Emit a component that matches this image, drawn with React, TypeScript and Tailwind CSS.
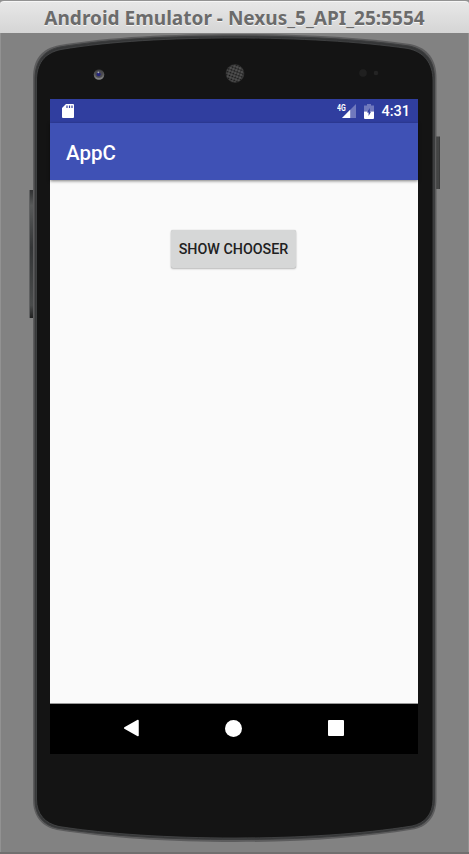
const BODY =
  'M33 78 C33 60 41 48.500 60 45 C110 36.8 172 34 235 34 C298 34 359 37 410 44 C428 47.500 436.500 60 436.500 78 L436.500 799 C436.500 817 427 827 413 829.5 C362 838 300 842 235 842 C170 842 107 838 57 830 C42 827 33 816 33 800 Z';
const RIM =
  'M35 79 C35 62 43 50.500 60 47 C110 38.8 172 36 235 36 C298 36 359 39 409 46 C426 49.500 434.500 61 434.500 79 L434.500 799 C434.500 816 425 825 413 827.5 C362 836 300 839.5 235 839.5 C170 839.5 107 836 57 828 C43 825 35 815 35 800 Z';
const FACE =
  'M36.5 81 C36.5 64 44 53 61 49.5 C110 41.2 172 38 235 38 C298 38 359 41.5 408 48.5 C424 52 433 63 433 81 L433 799 C433 815 424 823.5 412 826 C362 834 300 838 235 838 C170 838 107 834 59 826.5 C45 823.5 36.5 814 36.5 799 Z';

function DeviceFrame() {
  return (
    <svg className="absolute inset-x-0 top-0" width="469" height="854" viewBox="0 0 469 854" aria-hidden="true">
      <defs>
        <linearGradient id="left-key" x1="0" x2="0" y1="0" y2="1">
          <stop offset="0" stopColor="#303132" />
          <stop offset="0.12" stopColor="#585a5a" />
          <stop offset="0.45" stopColor="#343637" />
          <stop offset="0.9" stopColor="#4a4c4c" />
          <stop offset="1" stopColor="#202020" />
        </linearGradient>
        <linearGradient id="right-key" x1="0" x2="1">
          <stop offset="0" stopColor="#222" />
          <stop offset="0.6" stopColor="#4a4b4b" />
          <stop offset="1" stopColor="#333" />
        </linearGradient>
        <pattern id="mesh" width="3" height="3" patternUnits="userSpaceOnUse" patternTransform="rotate(20)">
          <rect width="3" height="3" fill="#555" />
          <circle cx="1.5" cy="1.5" r="1.1" fill="#151515" />
        </pattern>
        <linearGradient id="lens" x1="0" x2="0" y1="0" y2="1">
          <stop offset="0" stopColor="#303030" />
          <stop offset="1" stopColor="#8a8a8a" />
        </linearGradient>
      </defs>
      <rect x="29" y="190" width="5" height="128" fill="url(#left-key)" />
      <rect x="29" y="190" width="1" height="128" fill="#606162" />
      <rect x="435" y="136.500" width="5" height="52.500" fill="url(#right-key)" />
      <path d={BODY} fill="#5c5c5d" />
      <path d={RIM} fill="#353637" stroke="#3c3d3e" strokeWidth="1" />
      <path d={FACE} fill="#141414" stroke="#4b4c4d" strokeWidth="0.7" />
      <circle cx="99" cy="74.500" r="5.300" fill="url(#lens)" />
      <circle cx="99" cy="74" r="3.700" fill="#4a4a50" />
      <circle cx="98.600" cy="74.300" r="2" fill="#24247a" />
      <circle cx="98.400" cy="72.300" r="0.900" fill="#a9adb5" />
      <circle cx="235" cy="73.500" r="9" fill="url(#mesh)" stroke="#303030" strokeWidth="0.6" />
      <circle cx="363" cy="73" r="3.800" fill="#202020" />
      <circle cx="376" cy="73" r="2.300" fill="#242424" />
    </svg>
  );
}

function StatusBar() {
  return (
    <div className="flex h-6 items-center bg-[#303e9f] pl-3 pr-[8px] text-white">
      <svg width="12" height="14" viewBox="0 0 12 14">
        <path d="M4 0H11Q12 0 12 1V13Q12 14 11 14H1Q0 14 0 13V4Z" fill="#fff" />
        <path d="M5 1.500V4M7.500 1.500V4M10 1.500V4" stroke="#303e9f" strokeWidth="1.200" />
      </svg>
      <div className="ml-auto flex items-center">
        <div className="flex h-[15px] items-start">
          <span className="w-[9px] origin-top-left scale-x-[0.82] text-[8.5px] leading-[8px] font-bold">4G</span>
          <svg className="-ml-[5px]" width="15" height="15" viewBox="0 0 15 15">
            <path d="M15 0V14H1Z" fill="#7079bd" />
            <path d="M9.200 5.800V14H1Z" fill="#fff" />
          </svg>
        </div>
        <svg className="ml-2" width="10" height="15" viewBox="0 0 10 15">
          <path d="M3 0H7V1.500H10V7.500H0V1.500H3Z" fill="#7079bd" />
          <path d="M0 7.500H10V14Q10 15 9 15H1Q0 15 0 14Z" fill="#fff" />
          <path d="M5.800 4L3 8.500H4.600V12L7 7.700H5.800Z" fill="#303e9f" />
        </svg>
        <span className="ml-[7px] pt-[2px] text-[14.5px] leading-[22px] font-medium">4:31</span>
      </div>
    </div>
  );
}

function NavBar() {
  return (
    <nav className="flex h-[51px] items-center justify-between border-t border-[#999] bg-black pr-[74px] pb-[2px] pl-[73px] text-white">
      <svg width="17" height="18" viewBox="0 0 17 18">
        <path d="M15 1.500V16.500L1.700 9Z" fill="#fff" stroke="#fff" strokeWidth="1.500" strokeLinejoin="round" />
      </svg>
      <div className="size-[17px] rounded-full bg-white" />
      <div className="flex w-[17px] justify-center">
        <div className="size-4 rounded-[1px] bg-white" />
      </div>
    </nav>
  );
}

export default function App() {
  return (
    <div className="relative h-[854px] w-[469px] overflow-hidden bg-[#828282] font-[Roboto,sans-serif]">
      <DeviceFrame />
      <div className="flex h-full flex-col border-b-2 border-[#716f6f]">
        <div className="bg-[#909090]">
          <header className="relative flex h-[33px] items-center justify-center rounded-t-[4px] border-t border-[#939393] bg-linear-to-b from-[#e8e8e8] to-[#d5d5d5] shadow-[inset_0_1px_0_#f6f6f6]">
            <h1 className="whitespace-nowrap pt-[2px] font-['Noto_Sans',sans-serif] text-[19.05px] leading-[31px] font-bold text-[#6b6b6b] [text-shadow:0_1px_0_#f5f5f5]">
              Android Emulator - Nexus_5_API_25:5554
            </h1>
          </header>
        </div>
        <div className="relative flex-1 border-x border-[#929292] pt-[66px] pl-[49px]">
          <div className="flex h-[655px] w-[368px] flex-col bg-[#fafafa]">
            <StatusBar />
            <div className="flex h-[57px] items-center bg-[#3f51b5] px-4 pt-[3px] text-[20.5px] font-medium text-white shadow-[0_1px_3px_rgba(0,0,0,0.5)]">
              AppC
            </div>
            <main className="flex flex-1 items-start justify-center pt-[50px] pr-px">
              <button className="h-[37.5px] w-[125px] rounded-[2px] bg-[#d6d7d7] pt-[2px] text-[14.3px] font-medium whitespace-nowrap text-[#212121] shadow-[0_0_1px_rgba(0,0,0,0.25),0_1px_2px_rgba(0,0,0,0.25)]">
                SHOW CHOOSER
              </button>
            </main>
            <NavBar />
          </div>
        </div>
      </div>
    </div>
  );
}
